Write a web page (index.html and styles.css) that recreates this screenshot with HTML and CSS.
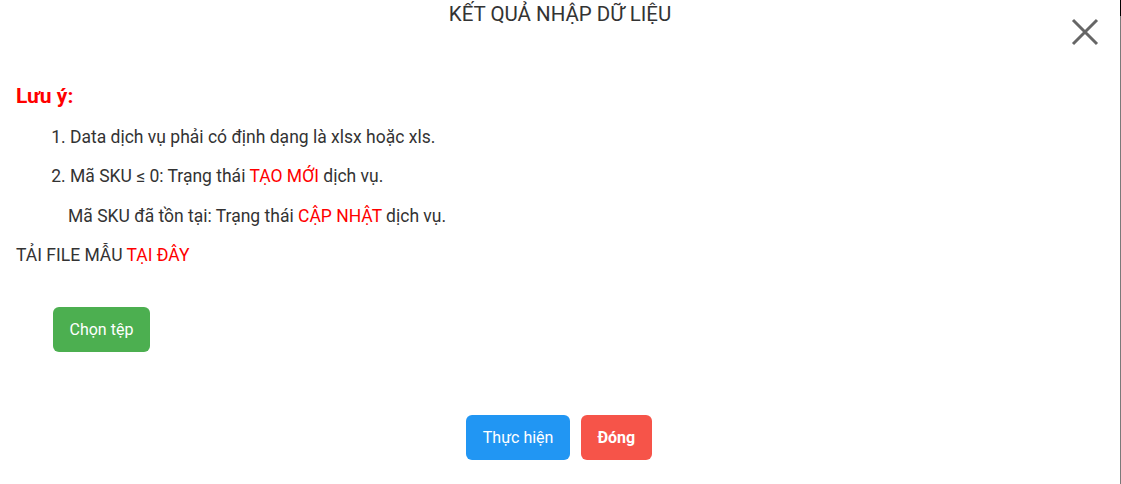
FILE: index.html
```html
<!DOCTYPE html>
<html lang="vi">
<head>
    <meta charset="UTF-8">
    <title>Kết quả nhập dữ liệu</title>
    <link rel="stylesheet" href="styles.css">
</head>
<body>
    <section class="modal">
        <header class="modal-head">
            <h2 class="modal-title">KẾT QUẢ NHẬP DỮ LIỆU</h2>
            <a href="javascript:;" class="close" aria-label="Đóng">
                <svg width="28" height="28" viewBox="0 0 28 28">
                    <path d="M2 2L26 26M26 2L2 26" stroke="#666" stroke-width="3" fill="none"/>
                </svg>
            </a>
        </header>
        <div class="modal-body">
            <p class="note-title">Lưu ý:</p>
            <ol class="note-list">
                <li>Data dịch vụ phải có định dạng là xlsx hoặc xls.</li>
                <li>Mã SKU ≤ 0: Trạng thái <span class="red">TẠO MỚI</span> dịch vụ.
                    <div class="sub">Mã SKU đã tồn tại: Trạng thái <span class="red">CẬP NHẬT</span> dịch vụ.</div>
                </li>
            </ol>
            <p class="download">TẢI FILE MẪU <a href="javascript:;" class="red">TẠI ĐÂY</a></p>
            <div class="upload">
                <button class="btn btn-green">Chọn tệp</button>
            </div>
        </div>
        <footer class="modal-foot">
            <button class="btn btn-blue">Thực hiện</button>
            <button class="btn btn-red">Đóng</button>
        </footer>
    </section>
</body>
</html>
```
FILE: styles.css
```css
html,body{
    margin:0;
    height:100%;
    overflow:hidden;
}
body{
    background:linear-gradient(#000 0,#000 16px,#7a7a7a 16px);
    font-family:Roboto,"Noto Sans",sans-serif;
    color:#333;
}
.modal{
    width:1120px;
    height:100%;
    background:#fff;
    display:flex;
    flex-direction:column;
}
.modal-head{
    display:flex;
    justify-content:center;
    height:77px;
    position:relative;
}
.modal-title{
    margin:0;
    font-size:20.5px;
    font-weight:400;
    line-height:28px;
}
.close{
    position:absolute;
    top:18px;
    right:21px;
    display:block;
    line-height:0;
}
.modal-body{
    padding:0 16px;
    font-size:17.5px;
    line-height:39.5px;
}
.note-title{
    margin:0;
    color:#f00;
    font-size:21px;
    font-weight:700;
}
.note-list{
    margin:0;
    padding-left:54px;
}
.note-list li{
    position:relative;
    top:1px;
}
.note-list .sub{
    margin-left:-2px;
}
.red{
    color:#f00;
    text-decoration:none;
}
.download{
    margin:0;
    position:relative;
    top:1px;
}
.upload{
    padding:32px 0 0 37px;
}
.btn{
    height:45px;
    padding:0 16.5px;
    border:0;
    border-radius:6px;
    color:#fff;
    font-family:Roboto,"Noto Sans",sans-serif;
    font-size:16px;
}
.btn-green{
    background:#4caf50;
}
.btn-blue{
    background:#2196f3;
}
.btn-red{
    background:#f65449;
    font-weight:700;
}
.modal-foot{
    display:flex;
    justify-content:center;
    gap:11px;
    padding:63px 2px 0 0;
}
```
